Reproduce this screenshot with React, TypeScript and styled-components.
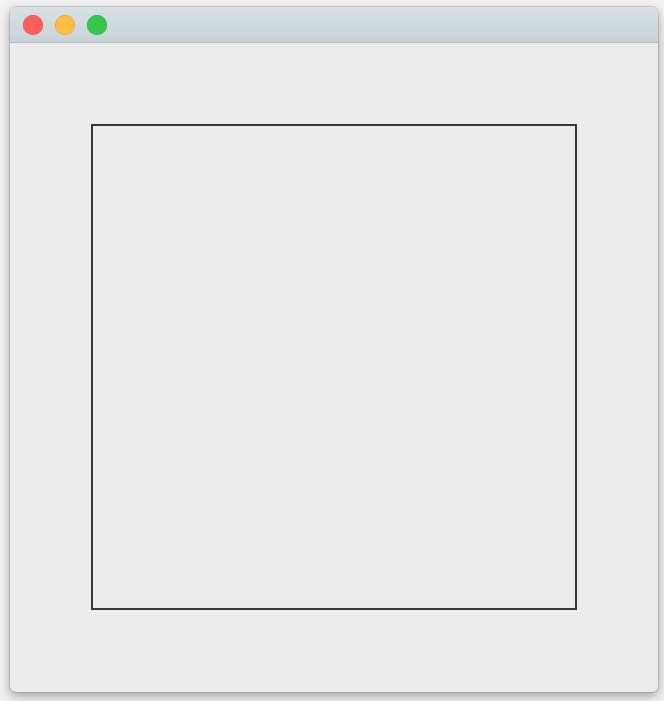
import React from "react";
import styled, { createGlobalStyle } from "styled-components";

const GlobalStyle = createGlobalStyle`
  html, body {
    margin: 0;
    padding: 0;
    background: #f3f3f3;
    font-family: "Liberation Sans", Arial, sans-serif;
  }
`;

const Page = styled.div`
  width: 664px;
  height: 701px;
  padding: 7px 0 0 10px;
  box-sizing: border-box;
  overflow: hidden;
`;

const Window = styled.div`
  width: 648px;
  height: 685px;
  display: flex;
  flex-direction: column;
  border-radius: 6px;
  background: #ececec;
  box-shadow: 0 0 0 1px rgba(0, 0, 0, 0.12), 0 4px 12px rgba(0, 0, 0, 0.35);
  overflow: hidden;
`;

const TitleBar = styled.div`
  height: 35px;
  flex: none;
  display: flex;
  align-items: center;
  gap: 12px;
  padding-left: 13px;
  background: linear-gradient(180deg, #d8e1e4 0%, #c9d3d7 100%);
  border-bottom: 1px solid #b3bbbe;
`;

const Light = styled.span<{ $color: string; $edge: string }>`
  width: 20px;
  height: 20px;
  border-radius: 50%;
  background: ${(p) => p.$color};
  box-shadow: inset 0 0 0 0.5px ${(p) => p.$edge};
`;

const Content = styled.div`
  flex: 1;
  padding: 81px;
  display: flex;
  align-items: flex-start;
  justify-content: center;
`;

const Canvas = styled.div`
  width: 486px;
  height: 486px;
  box-sizing: border-box;
  border: 2px solid #383838;
`;

export default function App() {
  return (
    <>
      <GlobalStyle />
      <Page>
        <Window>
          <TitleBar>
            <Light $color="#fc605c" $edge="#de4a45" />
            <Light $color="#fdbc40" $edge="#dea034" />
            <Light $color="#34c84a" $edge="#27a83a" />
          </TitleBar>
          <Content>
            <Canvas />
          </Content>
        </Window>
      </Page>
    </>
  );
}
